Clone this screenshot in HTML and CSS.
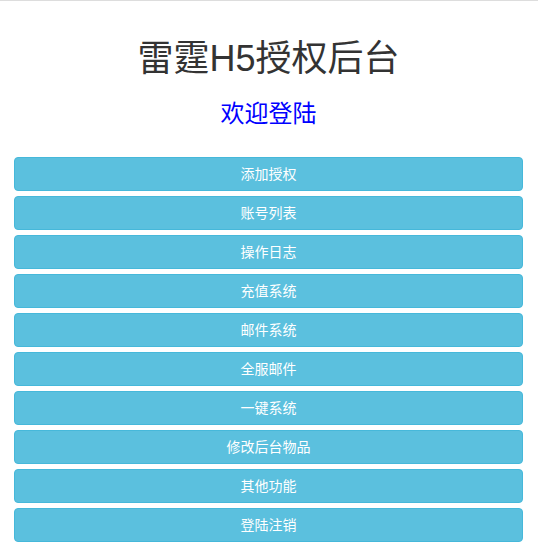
FILE: index.html
```html
<!DOCTYPE html>
<html lang="zh-CN">
<head>
<meta charset="utf-8">
<title>雷霆H5授权后台</title>
<link rel="stylesheet" href="styles.css">
</head>
<body>
<div class="page">
  <header class="head">
    <h1 class="title">雷霆H5授权后台</h1>
    <h2 class="welcome">欢迎登陆</h2>
  </header>
  <nav class="menu">
    <a class="btn" href="#">添加授权</a>
    <a class="btn" href="#">账号列表</a>
    <a class="btn" href="#">操作日志</a>
    <a class="btn" href="#">充值系统</a>
    <a class="btn" href="#">邮件系统</a>
    <a class="btn" href="#">全服邮件</a>
    <a class="btn" href="#">一键系统</a>
    <a class="btn" href="#">修改后台物品</a>
    <a class="btn" href="#">其他功能</a>
    <a class="btn" href="#">登陆注销</a>
  </nav>
</div>
</body>
</html>
```
FILE: styles.css
```css
* { box-sizing: border-box; }
html, body {
  margin: 0;
  padding: 0;
  background: #fff;
}
body {
  font-family: "Liberation Sans", "Noto Sans CJK SC", sans-serif;
  font-size: 14px;
  line-height: 1.42857;
  color: #333;
  border-top: 1px solid #ddd;
}
.page {
  padding: 0 15px 0 14px;
}
.head {
  text-align: center;
  padding-top: 38px;
}
.title {
  margin: 0;
  font-size: 36px;
  font-weight: 400;
  line-height: 1.1;
  color: #333;
}
.welcome {
  margin: 22px 0 0;
  font-size: 24px;
  font-weight: 400;
  line-height: 1.1;
  color: #00f;
}
.menu {
  display: flex;
  flex-direction: column;
  gap: 5px;
  margin-top: 30px;
}
.btn {
  display: block;
  height: 34px;
  padding: 6px 12px;
  font-size: 14px;
  line-height: 20px;
  text-align: center;
  color: #fff;
  text-decoration: none;
  background: #5bc0de;
  border: 1px solid #46b8da;
  border-radius: 4px;
}
```
